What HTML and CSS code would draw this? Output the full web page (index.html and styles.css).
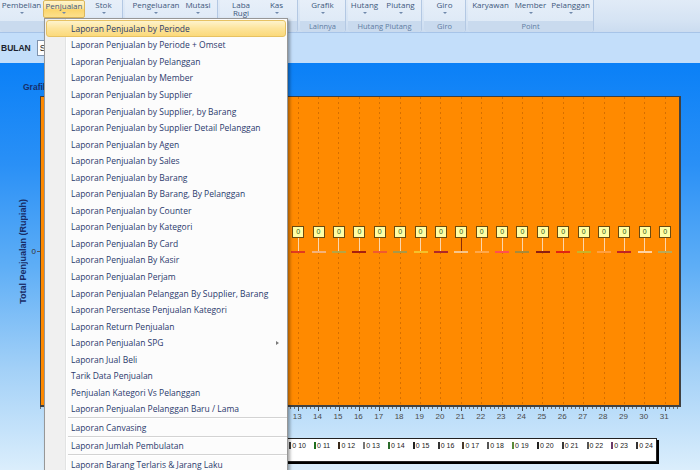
FILE: index.html
```html
<!DOCTYPE html>
<html>
<head>
<meta charset="utf-8">
<link rel="stylesheet" href="styles.css">
</head>
<body>
<div class="app">
  <div class="ribbon">
    <div class="group g1">
      <div class="btns">
        <div class="btn w43">Pembelian<i class="arrow"></i></div>
        <div class="btn w42 active">Penjualan<i class="arrow"></i></div>
        <div class="btn w37">Stok<i class="arrow"></i></div>
      </div>
      <div class="glabel">Transaksi</div>
    </div>
    <div class="group g2">
      <div class="btns pl3">
        <div class="btn w56">Pengeluaran<i class="arrow"></i></div>
        <div class="btn w28">Mutasi<i class="arrow"></i></div>
      </div>
      <div class="glabel">Biaya</div>
    </div>
    <div class="group g3">
      <div class="btns pl6 gap6">
        <div class="btn w30 two">Laba<br>Rugi</div>
        <div class="btn w29">Kas<i class="arrow"></i></div>
      </div>
      <div class="glabel">Keuangan</div>
    </div>
    <div class="group g4">
      <div class="btns center">
        <div class="btn w45">Grafik<i class="arrow"></i></div>
      </div>
      <div class="glabel">Lainnya</div>
    </div>
    <div class="group g5">
      <div class="btns">
        <div class="btn w33">Hutang<i class="arrow"></i></div>
        <div class="btn w39">Piutang<i class="arrow"></i></div>
      </div>
      <div class="glabel">Hutang Piutang</div>
    </div>
    <div class="group g6">
      <div class="btns center">
        <div class="btn w30">Giro<i class="arrow"></i></div>
      </div>
      <div class="glabel">Giro</div>
    </div>
    <div class="group g7">
      <div class="btns">
        <div class="btn w45">Karyawan</div>
        <div class="btn w35">Member<i class="arrow"></i></div>
        <div class="btn w45">Pelanggan<i class="arrow"></i></div>
      </div>
      <div class="glabel">Point</div>
    </div>
  </div>

  <div class="filterbar">
    <span class="bulan">BULAN</span>
    <div class="select">September</div>
  </div>

  <div class="chart-panel">
    <div class="chart-title">Grafik Penjualan Bulanan</div>
    <div class="chart-body">
      <div class="y-title"><span>Total Penjualan (Rupiah)</span></div>
      <div class="y-labels"><span>0</span><i class="ytick"></i></div>
      <div class="plot-col">
        <div class="plot">
          <div class="day" style="--c:#d03020"><b class="vbox">0</b><i class="stem"></i><i class="line"></i></div>
          <div class="day" style="--c:#e8a050"><b class="vbox">0</b><i class="stem"></i><i class="line"></i></div>
          <div class="day" style="--c:#a09030"><b class="vbox">0</b><i class="stem"></i><i class="line"></i></div>
          <div class="day" style="--c:#902010"><b class="vbox">0</b><i class="stem"></i><i class="line"></i></div>
          <div class="day" style="--c:#f06040"><b class="vbox">0</b><i class="stem"></i><i class="line"></i></div>
          <div class="day" style="--c:#b0a040"><b class="vbox">0</b><i class="stem"></i><i class="line"></i></div>
          <div class="day" style="--c:#f8c030"><b class="vbox">0</b><i class="stem"></i><i class="line"></i></div>
          <div class="day" style="--c:#a02020"><b class="vbox">0</b><i class="stem"></i><i class="line"></i></div>
          <div class="day" style="--c:#f8c080"><b class="vbox">0</b><i class="stem"></i><i class="line"></i></div>
          <div class="day" style="--c:#ffb060"><b class="vbox">0</b><i class="stem"></i><i class="line"></i></div>
          <div class="day" style="--c:#e04040"><b class="vbox">0</b><i class="stem"></i><i class="line"></i></div>
          <div class="day" style="--c:#a08030"><b class="vbox">0</b><i class="stem"></i><i class="line"></i></div>
          <div class="day" style="--c:#e03a20"><b class="vbox">0</b><i class="stem"></i><i class="line"></i></div>
          <div class="day" style="--c:#f3b27a"><b class="vbox">0</b><i class="stem"></i><i class="line"></i></div>
          <div class="day" style="--c:#b5a445"><b class="vbox">0</b><i class="stem"></i><i class="line"></i></div>
          <div class="day" style="--c:#a8200e"><b class="vbox">0</b><i class="stem"></i><i class="line"></i></div>
          <div class="day" style="--c:#f05a30"><b class="vbox">0</b><i class="stem"></i><i class="line"></i></div>
          <div class="day" style="--c:#a89848"><b class="vbox">0</b><i class="stem"></i><i class="line"></i></div>
          <div class="day" style="--c:#f5c02a"><b class="vbox">0</b><i class="stem"></i><i class="line"></i></div>
          <div class="day" style="--c:#b02828"><b class="vbox">0</b><i class="stem"></i><i class="line"></i></div>
          <div class="day" style="--c:#f7c58a;--s:#8a2c08"><b class="vbox">0</b><i class="stem"></i><i class="line"></i></div>
          <div class="day" style="--c:#ffa84a"><b class="vbox">0</b><i class="stem"></i><i class="line"></i></div>
          <div class="day" style="--c:#ff5050"><b class="vbox">0</b><i class="stem"></i><i class="line"></i></div>
          <div class="day" style="--c:#a88a3a"><b class="vbox">0</b><i class="stem"></i><i class="line"></i></div>
          <div class="day" style="--c:#8e1e10"><b class="vbox">0</b><i class="stem"></i><i class="line"></i></div>
          <div class="day" style="--c:#e02412"><b class="vbox">0</b><i class="stem"></i><i class="line"></i></div>
          <div class="day" style="--c:#c8b22a"><b class="vbox">0</b><i class="stem"></i><i class="line"></i></div>
          <div class="day" style="--c:#ffa040"><b class="vbox">0</b><i class="stem"></i><i class="line"></i></div>
          <div class="day" style="--c:#c02424"><b class="vbox">0</b><i class="stem"></i><i class="line"></i></div>
          <div class="day" style="--c:#ffd2a0"><b class="vbox">0</b><i class="stem"></i><i class="line"></i></div>
          <div class="day" style="--c:#b8a858"><b class="vbox">0</b><i class="stem"></i><i class="line"></i></div>
        </div>
        <div class="ticks"></div>
        <div class="x-labels">
          <span>1</span><span>2</span><span>3</span><span>4</span><span>5</span><span>6</span><span>7</span><span>8</span><span>9</span><span>10</span><span>11</span><span>12</span><span>13</span><span>14</span><span>15</span><span>16</span><span>17</span><span>18</span><span>19</span><span>20</span><span>21</span><span>22</span><span>23</span><span>24</span><span>25</span><span>26</span><span>27</span><span>28</span><span>29</span><span>30</span><span>31</span>
        </div>
      </div>
    </div>
    <div class="legend">
      <div class="lg" style="--l:#c03020"><i></i>0 1</div>
      <div class="lg" style="--l:#2a6a2a"><i></i>0 2</div>
      <div class="lg" style="--l:#333333"><i></i>0 3</div>
      <div class="lg" style="--l:#7a4a2a"><i></i>0 4</div>
      <div class="lg" style="--l:#3a5a8a"><i></i>0 5</div>
      <div class="lg" style="--l:#555555"><i></i>0 6</div>
      <div class="lg" style="--l:#6a3a6a"><i></i>0 7</div>
      <div class="lg" style="--l:#2b2b2b"><i></i>0 8</div>
      <div class="lg" style="--l:#4a7a3a"><i></i>0 9</div>
      <div class="lg" style="--l:#3a3a3a"><i></i>0 10</div>
      <div class="lg" style="--l:#1e6e1e"><i></i>0 11</div>
      <div class="lg" style="--l:#3a2a1a"><i></i>0 12</div>
      <div class="lg" style="--l:#777777"><i></i>0 13</div>
      <div class="lg" style="--l:#2b6b2b"><i></i>0 14</div>
      <div class="lg" style="--l:#222222"><i></i>0 15</div>
      <div class="lg" style="--l:#333333"><i></i>0 16</div>
      <div class="lg" style="--l:#4a3a2a"><i></i>0 17</div>
      <div class="lg" style="--l:#555555"><i></i>0 18</div>
      <div class="lg" style="--l:#5a8a3a"><i></i>0 19</div>
      <div class="lg" style="--l:#222222"><i></i>0 20</div>
      <div class="lg" style="--l:#3a3a3a"><i></i>0 21</div>
      <div class="lg" style="--l:#555555"><i></i>0 22</div>
      <div class="lg" style="--l:#6a3a6a"><i></i>0 23</div>
      <div class="lg" style="--l:#333333"><i></i>0 24</div>
      <div class="lg" style="--l:#8a2a2a"><i></i>0 25</div>
      <div class="lg" style="--l:#2a6a2a"><i></i>0 26</div>
      <div class="lg" style="--l:#444444"><i></i>0 27</div>
      <div class="lg" style="--l:#5a4a2a"><i></i>0 28</div>
      <div class="lg" style="--l:#2a4a7a"><i></i>0 29</div>
      <div class="lg" style="--l:#666666"><i></i>0 30</div>
      <div class="lg" style="--l:#3a3a3a"><i></i>0 31</div>
    </div>
  </div>

  <div class="menu">
    <div class="item hl">Laporan Penjualan by Periode</div>
    <div class="item">Laporan Penjualan by Periode + Omset</div>
    <div class="item">Laporan Penjualan by Pelanggan</div>
    <div class="item">Laporan Penjualan by Member</div>
    <div class="item">Laporan Penjualan by Supplier</div>
    <div class="item">Laporan Penjualan by Supplier, by Barang</div>
    <div class="item">Laporan Penjualan by Supplier Detail Pelanggan</div>
    <div class="item">Laporan Penjualan by Agen</div>
    <div class="item">Laporan Penjualan by Sales</div>
    <div class="item">Laporan Penjualan by Barang</div>
    <div class="item">Laporan Penjualan By Barang, By Pelanggan</div>
    <div class="item">Laporan Penjualan by Counter</div>
    <div class="item">Laporan Penjualan by Kategori</div>
    <div class="item">Laporan Penjualan By Card</div>
    <div class="item">Laporan Penjualan By Kasir</div>
    <div class="item">Laporan Penjualan Perjam</div>
    <div class="item">Laporan Penjualan Pelanggan By Supplier, Barang</div>
    <div class="item">Laporan Persentase Penjualan Kategori</div>
    <div class="item">Laporan Return Penjualan</div>
    <div class="item">Laporan Penjualan SPG<i class="sub"></i></div>
    <div class="item">Laporan Jual Beli</div>
    <div class="item">Tarik Data Penjualan</div>
    <div class="item">Penjualan Kategori Vs Pelanggan</div>
    <div class="item">Laporan Penjualan Pelanggan Baru / Lama</div>
    <div class="sep"></div>
    <div class="item">Laporan Canvasing</div>
    <div class="sep"></div>
    <div class="item">Laporan Jumlah Pembulatan</div>
    <div class="sep"></div>
    <div class="item">Laporan Barang Terlaris &amp; Jarang Laku</div>
  </div>
</div>
</body>
</html>
```

FILE: styles.css
```css
* { box-sizing: border-box; }
html, body { margin: 0; padding: 0; }
body {
  width: 700px;
  height: 470px;
  overflow: hidden;
  font-family: "Open Sans", "Noto Sans", sans-serif;
  background: #c3defa;
}
.app { position: relative; width: 700px; height: 470px; overflow: hidden; }

/* ---------- ribbon ---------- */
.ribbon {
  display: flex;
  height: 33px;
  background: linear-gradient(#e1ebf7, #d6e4f4 60%, #cbdcf0);
  border-bottom: 1px solid #a7c4e8;
}
.group {
  display: flex;
  flex-direction: column;
  height: 32px;
  margin-right: 2px;
  background: linear-gradient(#e7eff9, #dae7f5);
  border-right: 1px solid #b3c8e3;
  border-radius: 0 0 3px 3px;
}
.g1 { width: 123px; }
.g2 { width: 93px; }
.g3 { width: 78px; }
.g4 { width: 46px; }
.g5 { width: 74px; }
.g6 { width: 42px; }
.g7 { width: 126px; }
.btns { flex: 1; display: flex; }
.btns.center { justify-content: center; }
.pl3 { padding-left: 3px; }
.pl6 { padding-left: 6px; }
.gap6 { gap: 6px; }
.btn {
  display: flex;
  flex-direction: column;
  align-items: center;
  font-size: 8px;
  line-height: 10px;
  color: #3d587c;
  white-space: nowrap;
}
.btn.two { line-height: 8px; padding-top: 1px; text-align: center; }
.btn.active {
  height: 18px;
  line-height: 9px;
  background: linear-gradient(#fff4cc, #fde6a0 45%, #fbd56c 55%, #fde08c);
  border: 1px solid #dbb65c;
  border-radius: 2px;
}
.w28 { width: 28px; }
.w29 { width: 29px; }
.w30 { width: 30px; }
.w33 { width: 33px; }
.w35 { width: 35px; }
.w37 { width: 37px; }
.w39 { width: 39px; }
.w42 { width: 42px; }
.w43 { width: 43px; }
.w45 { width: 45px; }
.w56 { width: 56px; }
.arrow {
  width: 0;
  height: 0;
  margin-top: 1.5px;
  border-left: 2px solid transparent;
  border-right: 2px solid transparent;
  border-top: 2.5px solid #6f88ab;
}
.glabel {
  height: 11px;
  line-height: 11px;
  font-size: 7.5px;
  color: #607ca2;
  text-align: center;
  white-space: nowrap;
  overflow: hidden;
  background: #c9daee;
  border-radius: 0 0 3px 3px;
}

/* ---------- filter bar ---------- */
.filterbar {
  height: 30px;
  display: flex;
  align-items: center;
  background: #c3defa;
}
.bulan {
  font: bold 8.5px "Liberation Sans", Arial, sans-serif;
  color: #1b1f2e;
  margin-left: 1px;
}
.select {
  margin-left: 6px;
  width: 70px;
  height: 16px;
  border: 1px solid #7f93ad;
  background: #fff;
  font: 9px/14px "Liberation Sans", Arial, sans-serif;
  padding-left: 2px;
  color: #222;
}

/* ---------- chart ---------- */
.chart-panel {
  height: 407px;
  padding-top: 19px;
  background: linear-gradient(#0a80f7 0%, #2a90f6 25%, #5eaef6 50%, #a2d0f7 75%, #dbeefc 100%);
}
.chart-title {
  margin-left: 23px;
  font: bold 8.5px/10px "Liberation Sans", Arial, sans-serif;
  color: #172d6a;
  white-space: nowrap;
}
.chart-body {
  display: flex;
  align-items: flex-start;
  margin-top: 4px;
}
.y-title {
  width: 30px;
  height: 311px;
  padding-left: 17px;
  display: flex;
  align-items: center;
}
.y-title span {
  writing-mode: vertical-rl;
  transform: rotate(180deg);
  font: bold 9px/13px "Liberation Sans", Arial, sans-serif;
  color: #182c66;
  white-space: nowrap;
}
.y-labels {
  width: 10px;
  height: 311px;
  display: flex;
  align-items: center;
  justify-content: flex-end;
  font: 8px/10px "Liberation Sans", Arial, sans-serif;
  color: #333;
}
.ytick { width: 3px; height: 1px; background: #555; margin-left: 1px; }
.plot-col { width: 641px; }
.plot {
  height: 311px;
  display: flex;
  padding-left: 2.3px;
  background: #ff8a00;
  border: 1px solid #404040;
  border-right-width: 2px;
  border-bottom-width: 2px;
}
.day {
  width: 20.4px;
  flex: none;
  display: flex;
  flex-direction: column;
  align-items: center;
  padding-top: 129px;
  background-image: repeating-linear-gradient(to bottom, rgba(150, 70, 0, 0.4) 0 2px, transparent 2px 5px);
  background-size: 1px 100%;
  background-repeat: no-repeat;
  background-position: center top;
}
.vbox {
  width: 12px;
  height: 12px;
  flex: none;
  border: 1px solid #6a4a10;
  background: #ffffa6;
  font: 7px/10px "Liberation Sans", Arial, sans-serif;
  color: #2f5a10;
  text-align: center;
}
.stem { width: 1px; height: 13px; background: var(--s, #fcd6ab); }
.line { width: 14px; height: 2px; background: var(--c); }
.ticks {
  height: 4px;
  background-image:
    repeating-linear-gradient(to right, #4a4a4a 0 1px, transparent 1px 20.4px),
    repeating-linear-gradient(to right, #707070 0 1px, transparent 1px 4.08px);
  background-size: 100% 4px, 100% 2px;
  background-position: 13px 0, 13px 0;
  background-repeat: repeat-x;
}
.x-labels {
  display: flex;
  padding-left: 2.3px;
  margin-top: 1px;
}
.x-labels span {
  width: 20.4px;
  flex: none;
  text-align: center;
  font: 8px/10px "Liberation Sans", Arial, sans-serif;
  color: #4a4a4a;
}

.legend {
  margin-top: 16px;
  margin-left: 97px;
  width: 560px;
  height: 24px;
  display: flex;
  flex-wrap: wrap;
  align-content: flex-start;
  column-gap: 8.2px;
  padding: 2px 1px 0 3px;
  background: #fff;
  border: 1px solid #222;
  box-shadow: 2px 2px 0 #000;
}
.lg {
  display: flex;
  align-items: center;
  height: 9px;
  font: 7px/9px "Liberation Sans", Arial, sans-serif;
  color: #222;
  white-space: nowrap;
}
.lg i { width: 2px; height: 7px; margin-right: 1px; background: var(--l); }

/* ---------- dropdown menu ---------- */
.menu {
  position: absolute;
  left: 44px;
  top: 18px;
  width: 244px;
  height: 470px;
  padding-top: 1px;
  border: 1px solid #979797;
  background: linear-gradient(to right, #f0f0f0 0 20px, #e2e3e3 20px 21px, #ffffff 21px 22px, #fcfcfc 22px);
  box-shadow: 2px 2px 3px rgba(0, 0, 0, 0.35);
}
.item {
  height: 16.55px;
  display: flex;
  align-items: center;
  justify-content: space-between;
  padding: 0 8px 0 26px;
  font-size: 8.5px;
  color: #2b3a6c;
  white-space: nowrap;
}
.item.hl {
  margin: 0 1px;
  padding-left: 24px;
  background: linear-gradient(#fef3cc, #fde49b 50%, #fbd97b);
  border: 1px solid #e7c262;
  border-radius: 3px;
}
.sep {
  height: 2px;
  margin-left: 23px;
  border-top: 1px solid #d3d3d3;
  border-bottom: 1px solid #fff;
}
.sub {
  width: 0;
  height: 0;
  border-left: 3px solid #7a7a7a;
  border-top: 2.5px solid transparent;
  border-bottom: 2.5px solid transparent;
}
```
